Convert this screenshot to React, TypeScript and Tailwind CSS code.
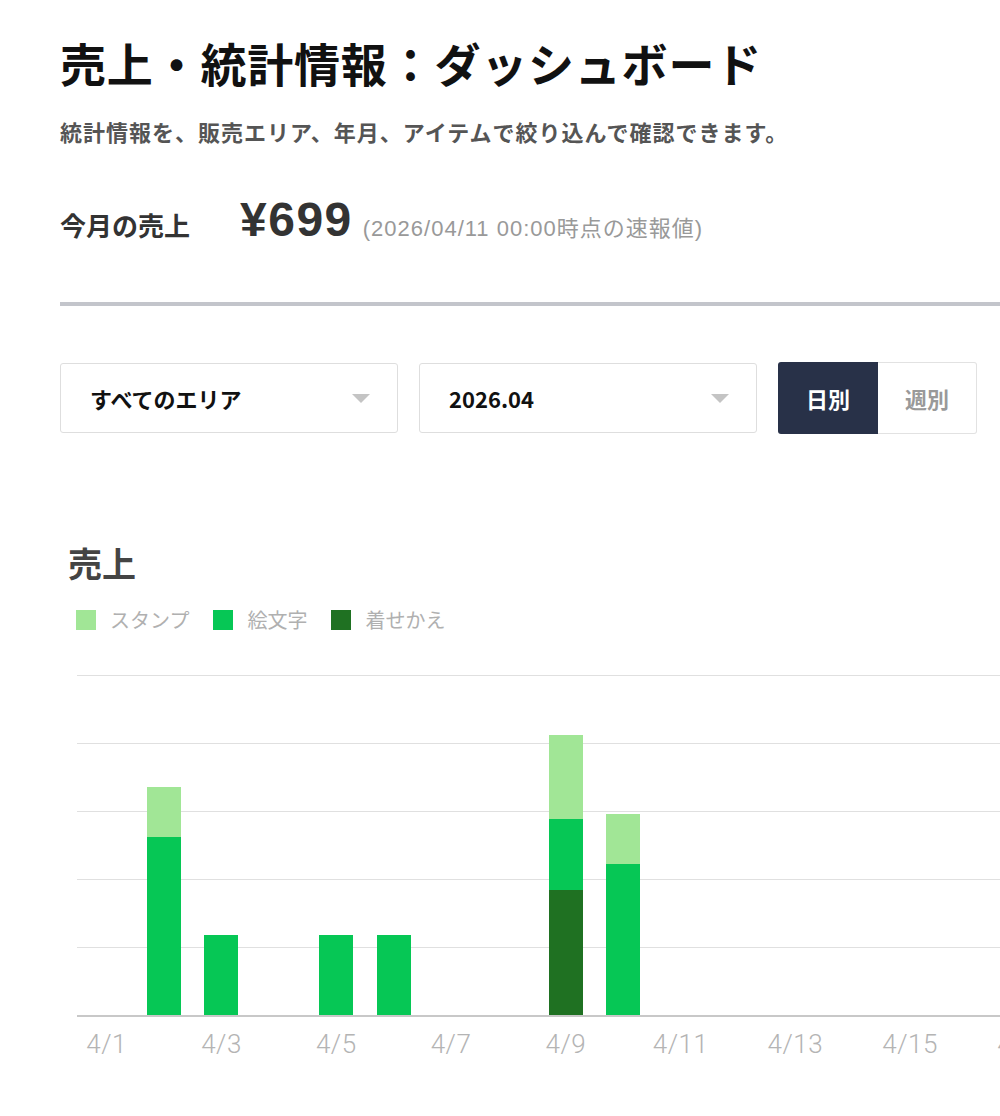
import React from 'react';

type DaySales = { day: number; stamp: number; emoji: number; theme: number };

// daily sales in yen for April
const sales: DaySales[] = [
  { day: 2, stamp: 37, emoji: 131, theme: 0 },
  { day: 3, stamp: 0, emoji: 59, theme: 0 },
  { day: 5, stamp: 0, emoji: 59, theme: 0 },
  { day: 6, stamp: 0, emoji: 59, theme: 0 },
  { day: 9, stamp: 62, emoji: 52, theme: 92 },
  { day: 10, stamp: 37, emoji: 111, theme: 0 },
];

const CHART_HEIGHT = 340;
const CHART_MAX = 250;
const px = (v: number) => (v * CHART_HEIGHT) / CHART_MAX;

const days = Array.from({ length: 30 }, (_, i) => i + 1);

const Select = ({ label }: { label: string }) => (
  <div className="w-[338px] h-[70px] flex items-center justify-between pl-[29px] pr-[27px] border border-[#dedede] rounded-[3px] bg-white">
    <span className="text-[22px] font-bold text-[#111]">{label}</span>
    <span className="w-0 h-0 border-l-[9px] border-r-[9px] border-t-[9px] border-l-transparent border-r-transparent border-t-[#c4c4c4]" />
  </div>
);

const Legend = ({ color, label }: { color: string; label: string }) => (
  <div className="flex items-center gap-[14px] mr-[24px]">
    <span className={`w-[20px] h-[20px] ${color}`} />
    <span className="text-[20px] text-[#b0b0b0]">{label}</span>
  </div>
);

const Bar = ({ d }: { d?: DaySales }) => (
  <div className="w-[57.4px] shrink-0 h-full flex flex-col justify-end items-center relative z-10">
    {d && (
      <div className="w-[34px] flex flex-col">
        {d.stamp > 0 && <div className="bg-[#a1e696]" style={{ height: px(d.stamp) }} />}
        {d.emoji > 0 && <div className="bg-[#06c755]" style={{ height: px(d.emoji) }} />}
        {d.theme > 0 && <div className="bg-[#1f7122]" style={{ height: px(d.theme) }} />}
      </div>
    )}
  </div>
);

export default function App() {
  return (
    <div
      className="w-[1000px] min-h-[1116px] bg-white overflow-hidden pl-[60px] pt-[31px] text-[#111]"
      style={{ fontFamily: '"Noto Sans CJK JP", "Noto Sans", sans-serif' }}
    >
      <h1 className="text-[46px] leading-[62px] font-bold tracking-[0.8px] text-[#111]">売上・統計情報：ダッシュボード</h1>
      <p className="mt-[23px] text-[22px] leading-[30px] font-bold tracking-[1px] text-[#555]">
        統計情報を、販売エリア、年月、アイテムで絞り込んで確認できます。
      </p>

      <div className="mt-[50px] flex items-baseline">
        <span className="text-[26px] font-bold text-[#333] w-[180px]">今月の売上</span>
        <span
          className="text-[48px] font-bold text-[#333] tracking-[1.5px] leading-none"
          style={{ fontFamily: '"Liberation Sans", Arial, sans-serif' }}
        >
          ¥699
        </span>
        <span
          className="ml-[10px] text-[22px] tracking-[1px] text-[#999]"
          style={{ fontFamily: '"Liberation Sans", "Noto Sans CJK JP", sans-serif' }}
        >
          (2026/04/11 00:00時点の速報値)
        </span>
      </div>

      <div className="mt-[57px] h-[4px] bg-[#c3c5cb] w-[1000px]" />

      <div className="mt-[56px] flex items-center gap-[21px]">
        <Select label="すべてのエリア" />
        <Select label="2026.04" />
        <div className="flex h-[72px]">
          <div className="w-[100px] flex items-center justify-center bg-[#283148] text-white text-[22px] font-bold rounded-l-[3px]">
            日別
          </div>
          <div className="w-[99px] flex items-center justify-center border border-l-0 border-[#e2e2e2] text-[#999] text-[22px] font-bold rounded-r-[3px]">
            週別
          </div>
        </div>
      </div>

      <div className="mt-[105px]">
        <h2 className="ml-[8px] text-[34px] leading-[48px] font-bold text-[#444]">売上</h2>
        <div className="ml-[16px] mt-[18px] flex items-center">
          <Legend color="bg-[#a1e696]" label="スタンプ" />
          <Legend color="bg-[#06c755]" label="絵文字" />
          <Legend color="bg-[#1f7122]" label="着せかえ" />
        </div>

        <div className="ml-[17px] mt-[40px] w-[1800px]">
          <div className="relative h-[342px] border-b-2 border-[#c8c8c8]">
            <div className="absolute inset-0 flex flex-col">
              {[0, 1, 2, 3, 4].map((i) => (
                <div key={i} className="h-[68px] border-t border-[#e0e0e0]" />
              ))}
            </div>
            <div className="flex h-full pl-[1px]">
              {days.map((day) => (
                <Bar key={day} d={sales.find((s) => s.day === day)} />
              ))}
            </div>
          </div>
          <div className="flex mt-[8px] pl-[1px]">
            {days.map((day) => (
              <div
                key={day}
                className="w-[57.4px] shrink-0 flex justify-center overflow-visible text-[26px] font-light tracking-[0.5px] text-[#b4b4b4] whitespace-nowrap"
                style={{ fontFamily: 'Roboto, "Liberation Sans", sans-serif' }}
              >
                {day % 2 === 1 ? `4/${day}` : ''}
              </div>
            ))}
          </div>
        </div>
      </div>
    </div>
  );
}
